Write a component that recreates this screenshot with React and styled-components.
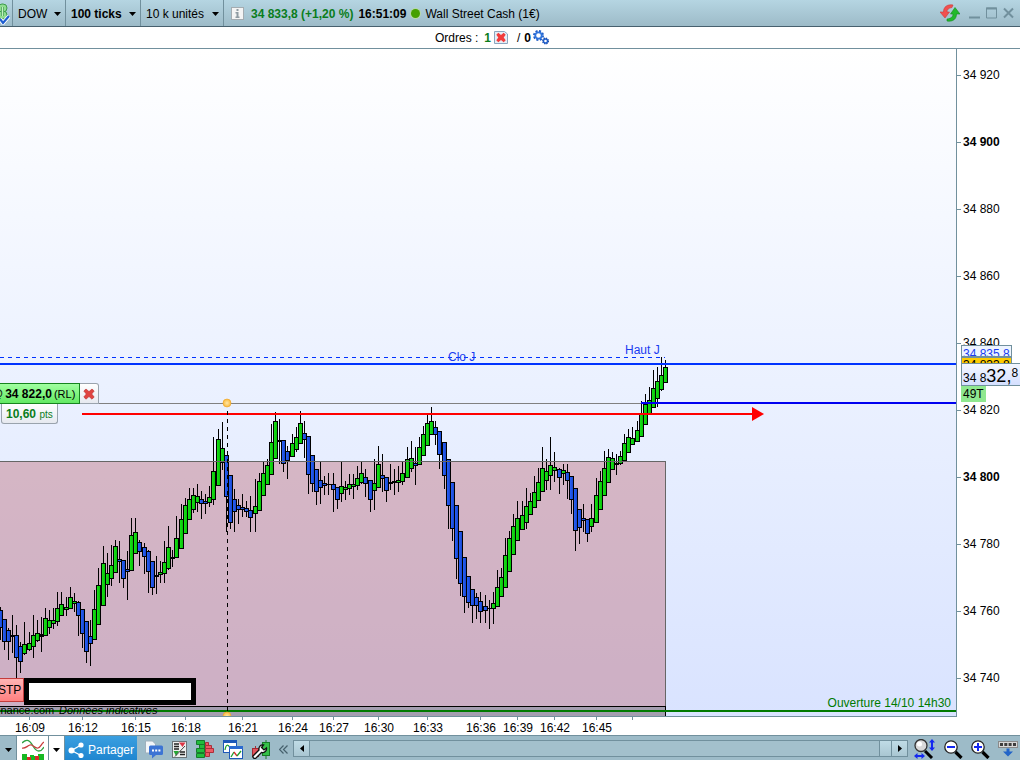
import React, { useState } from 'react';
import styled, { createGlobalStyle, css } from 'styled-components';

const GlobalStyle = createGlobalStyle`
  html, body, #root {
    height: 100%;
    margin: 0;
  }

  body {
    background: #fff;
    color: #000;
    font: 12px "Liberation Sans", Arial, sans-serif;
    overflow: hidden;
  }

  button, select {
    font: inherit;
    color: inherit;
  }
`;

// Height of the two bars above the plot, the drawing data counts from the window top
const PLOT_TOP = 49;

// x, high, body top, body bottom, low, direction (u = up, d = down, f = flat)
const candles = [
  [0, 607, 610, 627, 640, 'd'], [4, 619, 619, 641, 650, 'd'], [8, 628, 630, 641, 660, 'd'],
  [12, 615, 635, 636, 653, 'f'], [16, 625, 635, 657, 679, 'd'], [20, 642, 646, 661, 673, 'd'],
  [24, 622, 644, 653, 655, 'u'], [29, 632, 643, 649, 651, 'u'], [33, 615, 635, 646, 658, 'u'],
  [37, 620, 633, 640, 642, 'u'], [41, 617, 634, 636, 652, 'f'], [45, 608, 618, 635, 635, 'u'],
  [49, 610, 620, 627, 634, 'u'], [53, 608, 620, 623, 629, 'u'], [57, 592, 608, 621, 626, 'u'],
  [61, 592, 604, 615, 615, 'u'], [66, 597, 607, 609, 616, 'u'], [70, 587, 597, 608, 608, 'u'],
  [74, 593, 601, 603, 612, 'u'], [78, 601, 602, 615, 636, 'd'], [82, 609, 609, 633, 648, 'd'],
  [86, 621, 621, 651, 663, 'd'], [90, 620, 636, 643, 666, 'd'], [94, 590, 609, 639, 639, 'u'],
  [98, 568, 585, 624, 624, 'u'], [103, 546, 563, 605, 605, 'u'], [107, 553, 573, 584, 597, 'u'],
  [111, 545, 565, 578, 586, 'u'], [115, 540, 546, 572, 572, 'u'], [119, 541, 559, 561, 583, 'd'],
  [123, 560, 560, 578, 588, 'd'], [127, 551, 569, 571, 600, 'd'], [131, 518, 535, 570, 570, 'u'],
  [135, 518, 532, 553, 553, 'u'], [139, 540, 542, 551, 566, 'd'], [144, 543, 547, 556, 574, 'd'],
  [148, 550, 551, 571, 593, 'd'], [152, 561, 561, 587, 595, 'd'], [156, 556, 575, 576, 594, 'f'],
  [160, 561, 572, 574, 583, 'u'], [164, 541, 562, 573, 583, 'u'], [168, 526, 547, 568, 570, 'u'],
  [172, 550, 557, 558, 567, 'f'], [176, 516, 538, 557, 557, 'u'], [181, 504, 519, 548, 548, 'u'],
  [185, 498, 505, 533, 533, 'u'], [189, 488, 499, 519, 519, 'u'], [193, 488, 495, 509, 513, 'u'],
  [197, 484, 496, 502, 512, 'u'], [201, 491, 499, 503, 519, 'd'], [205, 494, 501, 503, 514, 'd'],
  [209, 486, 497, 502, 507, 'u'], [213, 437, 471, 499, 505, 'u'], [218, 429, 439, 485, 485, 'u'],
  [222, 422, 448, 462, 470, 'u'], [226, 455, 455, 496, 532, 'd'], [230, 475, 475, 522, 529, 'd'],
  [234, 489, 499, 511, 532, 'd'], [238, 499, 505, 509, 524, 'd'], [242, 494, 507, 509, 517, 'd'],
  [246, 501, 508, 511, 517, 'd'], [250, 496, 510, 517, 532, 'd'], [255, 479, 506, 513, 532, 'u'],
  [259, 473, 481, 510, 510, 'u'], [263, 462, 473, 495, 495, 'u'], [267, 459, 465, 484, 484, 'u'],
  [271, 424, 442, 474, 474, 'u'], [275, 412, 421, 458, 458, 'u'], [279, 419, 440, 441, 464, 'f'],
  [283, 440, 440, 463, 472, 'd'], [287, 446, 451, 460, 479, 'd'], [292, 434, 443, 456, 456, 'u'],
  [296, 427, 437, 449, 452, 'u'], [300, 411, 423, 443, 443, 'u'], [304, 421, 433, 439, 458, 'd'],
  [308, 436, 436, 474, 494, 'd'], [312, 455, 455, 483, 492, 'd'], [316, 469, 469, 491, 505, 'd'],
  [320, 462, 480, 487, 504, 'd'], [324, 476, 483, 485, 495, 'd'], [328, 473, 484, 484, 495, 'f'],
  [333, 473, 484, 489, 512, 'd'], [337, 487, 487, 499, 509, 'd'], [341, 462, 486, 493, 502, 'u'],
  [345, 481, 487, 489, 500, 'u'], [349, 474, 484, 488, 495, 'u'], [353, 474, 484, 486, 499, 'u'],
  [357, 466, 478, 485, 490, 'u'], [361, 462, 473, 482, 484, 'u'], [365, 469, 477, 483, 497, 'd'],
  [370, 480, 480, 499, 512, 'd'], [374, 459, 483, 490, 510, 'u'], [378, 446, 464, 487, 487, 'u'],
  [382, 454, 475, 478, 492, 'd'], [386, 477, 477, 490, 502, 'd'], [390, 464, 482, 483, 490, 'f'],
  [394, 469, 481, 482, 495, 'f'], [398, 466, 480, 482, 492, 'u'], [402, 462, 473, 481, 485, 'u'],
  [407, 447, 459, 477, 477, 'u'], [411, 441, 458, 468, 472, 'u'], [415, 447, 463, 465, 485, 'd'],
  [419, 437, 447, 464, 464, 'u'], [423, 426, 434, 455, 455, 'u'], [427, 414, 423, 445, 445, 'u'],
  [431, 407, 421, 434, 434, 'u'], [435, 421, 427, 434, 445, 'd'], [439, 431, 431, 454, 469, 'd'],
  [444, 442, 442, 475, 489, 'd'], [448, 459, 459, 505, 529, 'd'], [452, 482, 482, 528, 541, 'd'],
  [456, 505, 505, 558, 579, 'd'], [460, 531, 531, 583, 596, 'd'], [464, 557, 557, 596, 613, 'd'],
  [468, 576, 576, 602, 608, 'd'], [472, 589, 589, 605, 623, 'd'], [476, 593, 597, 605, 619, 'd'],
  [480, 592, 601, 611, 623, 'd'], [485, 595, 606, 610, 623, 'd'], [489, 600, 608, 608, 629, 'f'],
  [493, 592, 603, 608, 624, 'u'], [497, 570, 587, 606, 606, 'u'], [501, 568, 577, 596, 596, 'u'],
  [505, 538, 555, 587, 587, 'u'], [509, 531, 538, 571, 571, 'u'], [513, 514, 526, 554, 554, 'u'],
  [517, 501, 518, 540, 540, 'u'], [522, 501, 515, 529, 529, 'u'], [526, 488, 506, 522, 529, 'u'],
  [530, 493, 501, 514, 514, 'u'], [534, 476, 492, 507, 507, 'u'], [538, 468, 482, 500, 500, 'u'],
  [542, 447, 468, 491, 491, 'u'], [546, 459, 471, 480, 490, 'u'], [550, 437, 465, 475, 490, 'u'],
  [554, 452, 467, 470, 482, 'u'], [559, 468, 469, 477, 494, 'd'], [563, 464, 470, 473, 485, 'u'],
  [567, 464, 472, 480, 499, 'd'], [571, 476, 476, 499, 514, 'd'], [575, 488, 488, 530, 551, 'd'],
  [579, 509, 509, 527, 544, 'd'], [583, 504, 518, 520, 532, 'd'], [587, 519, 519, 533, 542, 'd'],
  [591, 504, 518, 526, 532, 'u'], [596, 478, 495, 522, 522, 'u'], [600, 471, 481, 509, 509, 'u'],
  [604, 451, 468, 495, 495, 'u'], [608, 449, 457, 482, 482, 'u'], [612, 452, 458, 469, 469, 'u'],
  [616, 454, 463, 464, 475, 'f'], [620, 451, 456, 463, 465, 'u'], [624, 434, 443, 460, 460, 'u'],
  [628, 429, 437, 452, 452, 'u'], [632, 427, 438, 444, 444, 'u'], [637, 421, 430, 441, 441, 'u'],
  [641, 401, 414, 436, 436, 'u'], [645, 394, 404, 424, 424, 'u'], [649, 387, 400, 413, 413, 'u'],
  [653, 370, 388, 407, 407, 'u'], [657, 367, 381, 398, 407, 'u'], [661, 357, 375, 389, 391, 'u'],
  [665, 360, 367, 382, 382, 'u'],
];

const prices = ['34 920', '34 900', '34 880', '34 860', '34 840', '34 820', '34 800', '34 780', '34 760', '34 740'];

const times = [
  [30, '16:09'], [83, '16:12'], [136, '16:15'], [186, '16:18'], [243, '16:21'], [293, '16:24'], [334, '16:27'],
  [379, '16:30'], [428, '16:33'], [481, '16:36'], [518, '16:39'], [555, '16:42'], [597, '16:45'],
];

const Caret = () => (
  <svg width="7" height="4" viewBox="0 0 7 4" aria-hidden="true">
    <path d="M0 0h7L3.5 4z" fill="#000" />
  </svg>
);

const CrossIcon = () => (
  <svg width="12" height="12" viewBox="0 0 12 12" aria-hidden="true">
    <path d="M3 1l3 2.600L9 1l2.200 2L8.700 6l2.500 3L9 11.200 6 8.500 3 11.200.800 9l2.500-3L.800 3z" fill="#e0433f" stroke="#b92f2f" strokeWidth=".6" />
  </svg>
);

const LinkIcon = () => (
  <svg width="10" height="24" viewBox="0 0 10 24" aria-hidden="true">
    <rect x="-2" y="3" width="9" height="8" rx="4" fill="#8fdc8f" stroke="#3d9c4c" />
    <rect x="-2" y="10" width="9" height="8" rx="4" fill="#8fdc8f" stroke="#3d9c4c" />
    <path d="M2.500 6v9" stroke="#3d9c4c" strokeWidth="3" />
    <path d="M2.500 6v9" stroke="#c2f0c2" strokeWidth="1.500" />
    <path d="M0 18l3 4 6-7" fill="none" stroke="#fff" strokeWidth="4" />
    <path d="M0 18l3 4 6-7" fill="none" stroke="#1f5fd0" strokeWidth="2.200" />
  </svg>
);

const InfoIcon = () => (
  <svg width="13" height="13" viewBox="0 0 13 13" aria-hidden="true">
    <rect x=".5" y=".5" width="12" height="12" fill="#f4f4f4" stroke="#a4acb1" />
    <path d="M5.500 2h2v2h-2zM4.500 5h3v4.500h1V11h-4V9.500h1v-3h-1z" fill="#8f9ba2" />
  </svg>
);

const CancelOrderIcon = () => (
  <svg width="14" height="13" viewBox="0 0 14 13" aria-hidden="true">
    <path d="M.5.500h10l3 2.500v9.500H.5z" fill="#e6eef6" stroke="#8aa6c0" />
    <path d="M4.300 1.800L7 4l2.700-2.200 2 2L9.700 6.500l2 2.700-2 2L7 9l-2.700 2.200-2-2 2-2.700-2-2.700z" fill="#f23c3c" />
  </svg>
);

const GearsIcon = () => (
  <svg width="16" height="15" viewBox="0 0 16 15" fill="none" aria-hidden="true">
    <circle cx="5.500" cy="5.500" r="4.500" stroke="#1c5cc8" strokeWidth="2" strokeDasharray="2 1.534" />
    <circle cx="5.500" cy="5.500" r="3.200" stroke="#2f74dc" strokeWidth="1.800" />
    <circle cx="12.500" cy="11" r="2.800" stroke="#1848a8" strokeWidth="1.500" strokeDasharray="1.300 .900" />
    <circle cx="12.500" cy="11" r="2" stroke="#1c5cc8" strokeWidth="1.400" />
  </svg>
);

const SyncIcon = () => (
  <svg width="20" height="18" viewBox="0 0 20 18" aria-hidden="true">
    <path d="M13 1C7 0 3.500 3 3.500 8H0l5 6 4.500-6H7c0-2.500 1.500-4 5-4.500z" fill="#f2504f" stroke="#c73a3d" strokeWidth=".6" />
    <path d="M7 17c6 1 9.500-2 9.500-7H20l-5-6.500L10.500 10H13c0 2.500-1.500 4.500-6 5z" fill="#22b92c" stroke="#158a1d" strokeWidth=".6" />
  </svg>
);

const ShareIcon = () => (
  <svg width="16" height="16" viewBox="0 0 16 16" fill="#fff" aria-hidden="true">
    <circle cx="3.500" cy="8.500" r="3" />
    <circle cx="13" cy="3" r="2.600" />
    <circle cx="13" cy="13.500" r="2.600" />
    <path d="M13 3L3.500 8.500l9.500 5" fill="none" stroke="#fff" strokeWidth="1.300" />
  </svg>
);

const IndicatorIcon = () => (
  <svg width="22" height="21" viewBox="0 0 22 21" aria-hidden="true">
    <path d="M0 4c4-4 7-4 11 3s8 6 11 1" fill="none" stroke="#2ea043" strokeWidth="1.300" />
    <path d="M0 9c3 1 5-2 8-3s5 4 8 3 3-4 6-6" fill="none" stroke="#c83c3c" strokeWidth="1.300" />
    <path d="M0 21v-6h5v3h3v-2h4v1h4v-2h6v6z" fill="#16b822" />
    <path d="M5 21v-3h4v3zM13 21v-4h4v4z" fill="#d92b2b" />
  </svg>
);

const ChatIcon = () => (
  <svg width="18" height="19" viewBox="0 0 18 19" aria-hidden="true">
    <path d="M.5 1h7l3 3v9H.5z" fill="#f3f6f9" stroke="#9fb0bc" />
    <rect x="4" y="5.500" width="14" height="9.500" rx="1.500" fill="#3c74d4" />
    <path d="M7 15v3.500l4-3.500z" fill="#3c74d4" />
    <path d="M7 9.500h2v2H7zM10.200 9.500h2v2h-2zM13.400 9.500h2v2h-2z" fill="#fff" />
  </svg>
);

const ReportIcon = () => (
  <svg width="15" height="17" viewBox="0 0 15 17" aria-hidden="true">
    <rect x=".5" y=".5" width="14" height="16" fill="#eef0f0" stroke="#6b7478" />
    <path d="M2 3h5M2 5.500h5M2 8h5M8 11h5M8 13.500h5" stroke="#222" strokeWidth="1.300" />
    <path d="M7 1.500h6.500L10.500 6z" fill="#dc3545" />
    <path d="M1.500 10H7l-3 5z" fill="#24a534" />
    <path d="M13 5L3 15.500" stroke="#444" />
  </svg>
);

const DepthIcon = () => (
  <svg width="18" height="18" viewBox="0 0 18 18" aria-hidden="true">
    <path d="M.5.500h8v4h-8zM3.500 4.500h5v4h-5zM.5 8.500h8v4h-8zM.5 13.500h8v4h-8z" fill="#22bd3c" stroke="#167c2a" />
    <path d="M9.500 2.500h3v3h-3zM9.500 5.500h6v3h-6zM9.500 8.500h8v4h-8zM9.500 12.500h4v4h-4z" fill="#ec5a64" stroke="#ad2f3a" />
  </svg>
);

const WindowsIcon = () => (
  <svg width="20" height="19" viewBox="0 0 20 19" aria-hidden="true">
    <rect x=".5" y=".5" width="13" height="12" fill="#fff" stroke="#1d58b8" />
    <path d="M0 0h14v3H0z" fill="#1d58b8" />
    <path d="M2 10c1-6 3-6 5-2" fill="none" stroke="#1ea02d" strokeWidth="1.300" />
    <rect x="6.500" y="6.500" width="13" height="12" fill="#fff" stroke="#1d58b8" />
    <path d="M6 6h14v3H6z" fill="#2b6ad0" />
    <path d="M8 17l3-5" fill="none" stroke="#1ea02d" strokeWidth="1.300" />
    <path d="M11 12l3 4" stroke="#d92b2b" strokeWidth="1.300" />
    <path d="M14 16l4-5" stroke="#1ea02d" strokeWidth="1.300" />
  </svg>
);

const WrenchIcon = () => (
  <svg width="18" height="19" viewBox="0 0 18 19" aria-hidden="true">
    <path d="M14 0v19" stroke="#177b27" />
    <rect x="10.500" y="2.500" width="7" height="13" fill="#35c049" stroke="#177b27" />
    <path d="M3.500 6v13" stroke="#a02b33" />
    <rect x=".5" y="8.500" width="6" height="8" fill="#e4525c" stroke="#a02b33" />
    <path d="M1.500 15.500l5.500-5.500c-.500-3 1.500-5.500 4.500-5L9.500 7.500l2.500 2.500 2.500-2c.500 3-2 5-5 4.500L4 18c-2 1.500-4-1-2.500-2.500z" fill="#fff" stroke="#111" strokeWidth="1.300" />
  </svg>
);

const FitIcon = () => (
  <svg width="22" height="20" viewBox="0 0 22 20" aria-hidden="true">
    <path d="M11 12l7 7" stroke="#000" strokeWidth="3" />
    <circle cx="7" cy="6.500" r="6" fill="#d9d9d9" stroke="#333" strokeWidth="1.300" />
    <circle cx="5.500" cy="5" r="2.500" fill="#fff" />
    <path d="M18 0l3 3.500h-2v5h2L18 12l-3-3.500h2v-5h-2zM0 17l3.500-3v2h4v-2l3.500 3-3.500 3v-2h-4v2z" fill="#1428f0" />
  </svg>
);

const ZoomIcon = ({ plus }) => (
  <svg width="19" height="19" viewBox="0 0 19 19" aria-hidden="true">
    <path d="M11.500 12l6 6" stroke="#000" strokeWidth="3.200" />
    <circle cx="7" cy="7" r="6.200" fill="#fff" stroke="#222" strokeWidth="1.300" />
    <path d={plus ? 'M3 6h3V3h2v3h3v2H8v3H6V8H3z' : 'M3 6h8v2H3z'} fill="#1428f0" />
  </svg>
);

const DockIcon = () => (
  <svg width="20" height="16" viewBox="0 0 20 16" aria-hidden="true">
    <rect x=".5" y=".5" width="19" height="6" fill="#d8d8d8" stroke="#8a8a8a" />
    <path d="M2 2h3v3H2zM6.300 2h3v3h-3zM10.600 2h3v3h-3zM15 2h3v3h-3z" fill="#3c3c3c" />
    <path d="M8.500 7.500h3v3H15L10 15.500 5 10.500h3.500z" fill="#2264c8" />
  </svg>
);

const Candle = ({ data }) => {
  const [x, high, top, bottom, low, dir] = data;
  const height = bottom - top + 1;
  return (
    <g>
      <rect x={x} y={high} width="1" height={low - high} />
      <rect x={x - 2} y={top} width="5" height={height} />
      {dir !== 'f' && <rect x={x - 1} y={top + 1} width="3" height={height - 2} fill={`url(#${dir})`} />}
    </g>
  );
};

const Chart = () => (
  <ChartSvg aria-label="DOW 100 ticks" role="img">
    <defs>
      <linearGradient id="u">
        <stop offset="0" stopColor="#18e018" />
        <stop offset="1" stopColor="#08c408" />
      </linearGradient>
      <linearGradient id="d">
        <stop offset="0" stopColor="#2860f8" />
        <stop offset="1" stopColor="#1848d0" />
      </linearGradient>
      <radialGradient id="handle">
        <stop offset="0" stopColor="#ffe7a8" />
        <stop offset="1" stopColor="#fbb93a" />
      </radialGradient>
    </defs>
    <g transform={`translate(0 ${-PLOT_TOP})`}>
      <g shapeRendering="crispEdges">
        <rect x="-1.500" y="461.500" width="667" height="245" fill="#b44650" fillOpacity=".33" stroke="#666" />
        <rect x="-1.500" y="706.500" width="667" height="12" fill="#80707c" fillOpacity=".6" stroke="#000" />
        <path d="M99 403.500h542" stroke="#808080" />
        <path d="M0 357.500h665" stroke="#0033ff" strokeDasharray="4 4" />
        <g>{candles.map((c) => <Candle key={c[0]} data={c} />)}</g>
        <path d="M0 461.500h665" stroke="#666" />
        <line x1="0" x2="100%" y1="364" y2="364" stroke="#0033ff" strokeWidth="2" />
        <line x1="641" x2="100%" y1="403" y2="403" stroke="#0000f0" strokeWidth="2" />
        <line x1="0" x2="100%" y1="711" y2="711" stroke="#007a00" strokeWidth="2" />
        <path d="M82 414h671" stroke="#f00" strokeWidth="2" />
        <path d="M227.500 411v305" stroke="#000" strokeDasharray="4 4" />
      </g>
      <path d="M752 407l12 7-12 7z" fill="#f00" />
      <circle cx="227" cy="403" r="4" fill="url(#handle)" stroke="#eda52a" strokeWidth=".6" />
      <circle cx="227" cy="716" r="4" fill="url(#handle)" stroke="#eda52a" strokeWidth=".6" />
      <g fill="#1a3cf0">
        <text x="448" y="361">Clo J</text>
        <text x="625" y="354">Haut J</text>
      </g>
      <g fontSize="11">
        <text x="-2" y="714">inance.com</text>
        <text x="59" y="714" fontStyle="italic">Données indicatives</text>
      </g>
    </g>
  </ChartSvg>
);

const Picker = ({ label, value, bold, width }) => (
  <PickerLabel $width={width}>
    <PickerSelect aria-label={label} $bold={bold} defaultValue={value}>
      <option>{value}</option>
    </PickerSelect>
    <Caret />
  </PickerLabel>
);

const App = () => {
  const [positionOpen, setPositionOpen] = useState(true);

  return (
    <Page>
      <GlobalStyle />
      <TopBar>
        <LinkButton aria-label="Lier"><LinkIcon /></LinkButton>
        <Picker label="Valeur" value="DOW" width={53} />
        <Picker label="Vue" value="100 ticks" bold width={75} />
        <Picker label="Historique" value="10 k unités" width={83} />
        <Quote>
          <InfoIcon />
          <Change>34 833,8 (+1,20 %)</Change>
          <strong>16:51:09</strong>
          <StatusDot />
          <span>Wall Street Cash (1€)</span>
        </Quote>
        <WindowButtons>
          <BareButton aria-label="Actualiser"><SyncIcon /></BareButton>
          <BareButton aria-label="Réduire">
            <svg width="11" height="12"><path d="M0 10.500h11" stroke="#71909d" strokeWidth="2" /></svg>
          </BareButton>
          <BareButton aria-label="Agrandir">
            <svg width="11" height="12"><path d="M.5 1h10v10H.5z" fill="none" stroke="#71909d" /><path d="M0 1.500h11" stroke="#71909d" strokeWidth="2" /></svg>
          </BareButton>
          <BareButton aria-label="Fermer">
            <svg width="11" height="12"><path d="M1 1.500l9 9M10 1.500l-9 9" stroke="#71909d" strokeWidth="2" /></svg>
          </BareButton>
        </WindowButtons>
      </TopBar>

      <OrdersBar>
        <span>Ordres :</span>
        <OrderCount>1</OrderCount>
        <BareButton aria-label="Annuler les ordres"><CancelOrderIcon /></BareButton>
        <Slash>/</Slash>
        <PendingCount>0</PendingCount>
        <BareButton aria-label="Réglages"><GearsIcon /></BareButton>
      </OrdersBar>

      <Main>
        <Plot>
          <Chart />
          {positionOpen && (
            <Position>
              <PositionRow>
                <PositionTag>@<strong>34 822,0</strong><small>(RL)</small></PositionTag>
                <CloseButton aria-label="Fermer la position" onClick={() => setPositionOpen(false)}>
                  <CrossIcon />
                </CloseButton>
              </PositionRow>
              <Gain><strong>10,60</strong> <small>pts</small></Gain>
            </Position>
          )}
          <StopOrder>
            <StopTag>STP</StopTag>
            <StopField />
          </StopOrder>
          <OpenLabel>Ouverture 14/10 14h30</OpenLabel>
        </Plot>
        <PriceAxis>
          {prices.map((p) => <Price key={p} $bold={p.endsWith('00')}>{p}</Price>)}
          <AxisTags>
            <HighTag>34 835,8</HighTag>
            <CloseTag>34 833,8</CloseTag>
            <LastTag>34 8<big>32,</big><sup>8</sup></LastTag>
            <TicksTag>49T</TicksTag>
          </AxisTags>
        </PriceAxis>
      </Main>

      <TimeAxis aria-label="Heures">
        {times.map(([x, t]) => (
          <g key={t}>
            <path d={`M${x - 0.5} 0v3`} stroke="#71909d" />
            <text x={x} y="15" textAnchor="middle">{t}</text>
          </g>
        ))}
        <path d="M632.500 0v3" stroke="#71909d" />
      </TimeAxis>

      <BottomBar>
        <ArrowButton aria-label="Plus d'outils"><Caret /></ArrowButton>
        <IndicatorButton aria-label="Indicateurs"><IndicatorIcon /></IndicatorButton>
        <ArrowButton $white aria-label="Choisir un indicateur"><Caret /></ArrowButton>
        <ShareButton><ShareIcon />Partager</ShareButton>
        <Tools>
          <BareButton aria-label="Messages"><ChatIcon /></BareButton>
          <BareButton aria-label="Rapport"><ReportIcon /></BareButton>
          <BareButton aria-label="Carnet"><DepthIcon /></BareButton>
          <BareButton aria-label="Fenêtres"><WindowsIcon /></BareButton>
          <BareButton aria-label="Options"><WrenchIcon /></BareButton>
          <BareButton aria-label="Replier">
            <svg width="9" height="9"><path d="M4.500.500l-4 4 4 4M8.500.500l-4 4 4 4" fill="none" stroke="#46606c" strokeWidth="1.200" /></svg>
          </BareButton>
        </Tools>
        <Scroller>
          <ScrollButton aria-label="Défiler à gauche">
            <svg width="4" height="7"><path d="M4 0v7L0 3.500z" /></svg>
          </ScrollButton>
          <ScrollTrack><ScrollThumb /></ScrollTrack>
          <ScrollButton aria-label="Défiler à droite">
            <svg width="4" height="7"><path d="M0 0v7l4-3.500z" /></svg>
          </ScrollButton>
        </Scroller>
        <ZoomTools>
          <BareButton aria-label="Ajuster"><FitIcon /></BareButton>
          <BareButton aria-label="Zoom arrière"><ZoomIcon /></BareButton>
          <BareButton aria-label="Zoom avant"><ZoomIcon plus /></BareButton>
          <BareButton aria-label="Ancrer"><DockIcon /></BareButton>
        </ZoomTools>
      </BottomBar>
    </Page>
  );
};

const Page = styled.div`
  display: flex;
  flex-direction: column;
  height: 100vh;
  overflow: hidden;
`;

const BareButton = styled.button`
  display: flex;
  padding: 0;
  border: 0;
  background: none;
  cursor: pointer;
`;

/* Top bar */
const TopBar = styled.header`
  display: flex;
  flex: none;
  height: 26px;
  border-bottom: 1px solid #47606e;
  background: linear-gradient(#b5d5e2, #9dbbc8);
`;

const LinkButton = styled(BareButton)`
  width: 12px;
  align-items: center;
`;

const PickerLabel = styled.label`
  display: flex;
  align-items: center;
  justify-content: space-between;
  box-sizing: border-box;
  width: ${({ $width }) => $width}px;
  padding: 1px 4px 0 5px;
  border-left: 1px solid #71909d;
`;

const PickerSelect = styled.select`
  appearance: none;
  padding: 0;
  border: 0;
  background: none;
  font-weight: ${({ $bold }) => ($bold ? 'bold' : 'normal')};
`;

const Quote = styled.div`
  display: flex;
  align-items: center;
  gap: 5px;
  padding: 1px 0 0 7px;
  border-left: 1px solid #71909d;
  white-space: nowrap;
`;

const Change = styled.strong`
  padding-left: 2px;
  color: #0a7d1c;
`;

const StatusDot = styled.i`
  width: 9px;
  height: 9px;
  border-radius: 50%;
  background: #46a000;
  box-shadow: 0 0 0 1px #b9d9a8;
`;

const WindowButtons = styled.div`
  display: flex;
  align-items: center;
  gap: 6px;
  margin-left: auto;
  padding-right: 6px;

  button:first-child {
    margin-right: 3px;
  }
`;

/* Orders */
const OrdersBar = styled.div`
  display: flex;
  flex: none;
  align-items: center;
  justify-content: center;
  height: 21px;
  padding-right: 36px;
  border-bottom: 1px solid #71909d;
`;

const OrderCount = styled.strong`
  padding: 0 3px 0 6px;
  color: #0a7d1c;
`;

const Slash = styled.span`
  padding: 0 4px 0 9px;
`;

const PendingCount = styled.strong`
  padding-right: 2px;
`;

/* Plot */
const Main = styled.main`
  display: flex;
  flex: 1;
  min-height: 0;
`;

const Plot = styled.section`
  position: relative;
  flex: 1;
  overflow: hidden;
  border-right: 1px solid #71909d;
  border-bottom: 1px solid #71909d;
  background: linear-gradient(#fff, #ebf1ff 50%, #d9e3ff);
`;

const ChartSvg = styled.svg`
  display: block;
  width: 100%;
  height: 100%;
`;

const Position = styled.div`
  position: absolute;
  top: 334px;
  left: -10px;
`;

const PositionRow = styled.div`
  display: flex;
  height: 21px;
`;

const PositionTag = styled.div`
  display: flex;
  align-items: center;
  gap: 2px;
  padding: 0 4px 0 0;
  border: 1px solid #16841e;
  background: linear-gradient(#a0ffa0, #63e963);

  small {
    font-size: 11px;
  }
`;

const CloseButton = styled.button`
  display: flex;
  align-items: center;
  justify-content: center;
  width: 19px;
  padding: 0;
  border: 1px solid #9aa3ad;
  border-left: 0;
  border-radius: 0 3px 0 0;
  background: linear-gradient(#fff, #e6e9f0);
`;

const Gain = styled.div`
  box-sizing: border-box;
  width: 57px;
  height: 20px;
  margin-left: 11px;
  padding-left: 4px;
  border: 1px solid #9aa3ad;
  border-top: 0;
  border-radius: 0 0 3px 3px;
  background: linear-gradient(#fff, #e6e9f0);
  color: #0a7d1c;
  line-height: 20px;

  small {
    font-size: 10px;
  }
`;

const StopOrder = styled.div`
  position: absolute;
  top: 629px;
  left: -4px;
  display: flex;
  align-items: flex-start;
`;

const StopTag = styled.div`
  padding: 0 2px 0 1px;
  border: 1px solid #c43c3c;
  background: linear-gradient(#ffb4b4, #ff8080);
  line-height: 22px;
`;

const StopField = styled.div`
  width: 162px;
  height: 17px;
  border: 5px solid #000;
  background: #fff;
`;

const OpenLabel = styled.div`
  position: absolute;
  right: 5px;
  bottom: 6px;
  color: #007a00;
`;

/* Axes */
const PriceAxis = styled.aside`
  position: relative;
  width: 63px;
  padding-top: 16px;
  overflow: hidden;
`;

const Price = styled.div`
  display: flex;
  align-items: center;
  gap: 2px;
  height: 20px;
  margin-bottom: 47px;
  font-weight: ${({ $bold }) => ($bold ? 'bold' : 'normal')};
  white-space: nowrap;

  &::before {
    content: '';
    width: 4px;
    height: 1px;
    background: #71909d;
  }
`;

const AxisTags = styled.div`
  position: absolute;
  top: 296px;
  left: 4px;
  display: flex;
  flex-direction: column;
  align-items: flex-start;
`;

const tag = css`
  padding: 0 1px;
  border: 1px solid #71909d;
  white-space: nowrap;
  overflow: hidden;
`;

const HighTag = styled.div`
  ${tag}
  height: 10px;
  background: #eef4ff;
  color: #1a3cf0;
  line-height: 16px;
`;

const CloseTag = styled.div`
  ${tag}
  height: 5px;
  border-bottom: 0;
  background: #ffcc00;
  line-height: 14px;
`;

const LastTag = styled.div`
  ${tag}
  width: 60px;
  height: 21px;
  background: linear-gradient(#f4f7ff, #d4dfff);
  line-height: 24px;

  big {
    font-size: 18px;
  }

  sup {
    font-size: 12px;
    line-height: 0;
    vertical-align: 5px;
  }
`;

const TicksTag = styled.div`
  padding: 0 2px;
  background: #8fe88f;
  line-height: 16px;
`;

const TimeAxis = styled.svg`
  flex: none;
  width: 100%;
  height: 18px;
`;

/* Bottom bar */
const BottomBar = styled.footer`
  display: flex;
  flex: none;
  height: 24px;
  border-top: 1px solid #71909d;
  background: #9dbbc8;
`;

const ArrowButton = styled.button`
  display: flex;
  align-items: center;
  justify-content: center;
  width: ${({ $white }) => ($white ? 16 : 17)}px;
  padding: 4px 0 0;
  border: 0;
  border-right: 1px solid #71909d;
  background: ${({ $white }) => ($white ? '#fff' : 'none')};
`;

const IndicatorButton = styled.button`
  display: flex;
  align-items: flex-end;
  justify-content: center;
  width: 32px;
  padding: 0;
  border: 0;
  border-right: 1px solid #71909d;
  background: #fff;
`;

const ShareButton = styled.button`
  display: flex;
  align-items: center;
  gap: 4px;
  padding: 4px 3px 0;
  border: 0;
  background: linear-gradient(#3a9fe0, #1f86d0);
  color: #fff;
`;

const Tools = styled.div`
  display: flex;
  align-items: center;
  gap: 9px;
  padding: 2px 5px 0 8px;
`;

const Scroller = styled.div`
  display: flex;
  flex: 1;
  height: 15px;
  margin-top: 4px;
  border: 1px solid #71909d;
  background: #a3c0cc;
`;

const ScrollButton = styled.button`
  display: flex;
  align-items: center;
  justify-content: center;
  width: 15px;
  padding: 0;
  border: 0;
  background: linear-gradient(#c0dce6, #a9c6d2);
`;

const ScrollTrack = styled.div`
  display: flex;
  flex: 1;
  justify-content: flex-end;
  border: solid #71909d;
  border-width: 0 1px;
`;

const ScrollThumb = styled.div`
  width: 11px;
  border-left: 1px solid #71909d;
  background: linear-gradient(#c0dce6, #a9c6d2);
`;

const ZoomTools = styled.div`
  display: flex;
  align-items: center;
  gap: 8px;
  padding: 2px 2px 0 6px;
`;

export default App;
